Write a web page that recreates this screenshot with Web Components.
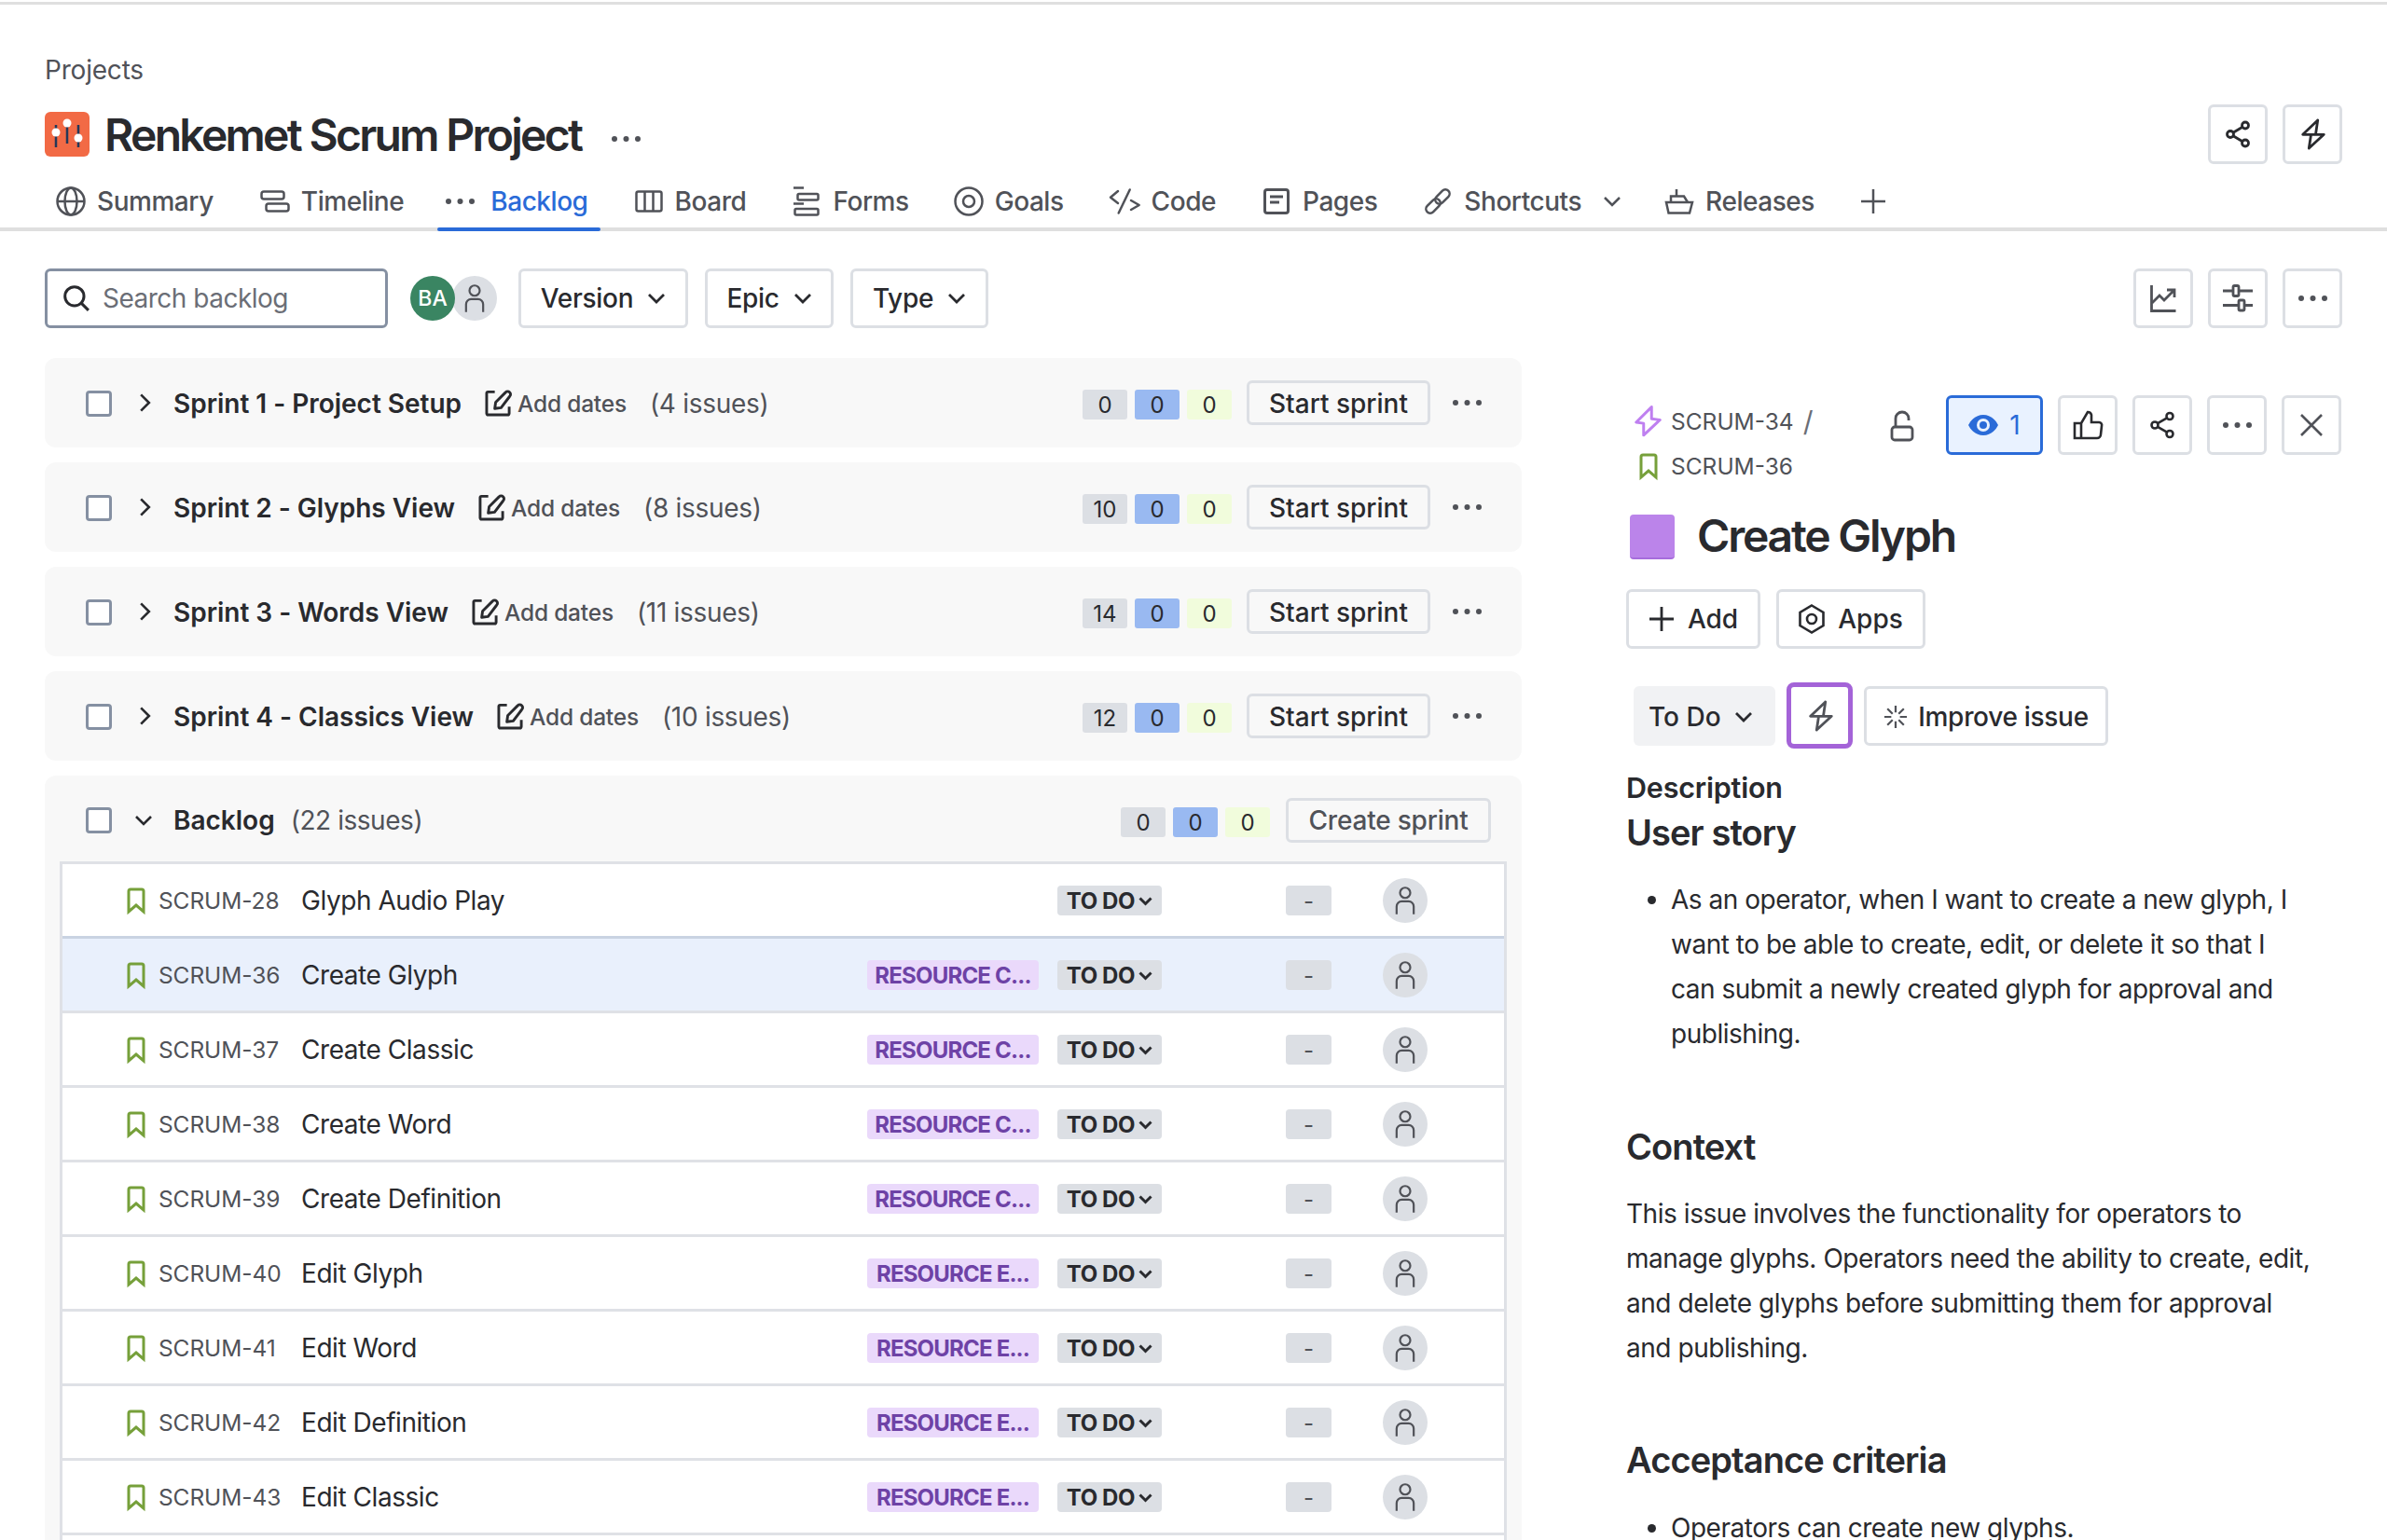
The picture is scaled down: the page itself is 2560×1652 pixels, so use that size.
<!DOCTYPE html>
<html lang="en">
<head>
<meta charset="utf-8">
<title>Backlog</title>
<style>
  html, body { margin: 0; background: #fff; }
  body {
    width: 2560px; height: 1652px; overflow: hidden;
    font-family: Inter, "Liberation Sans", sans-serif; font-size: 28px; color: #292a2e;
    display: flex; flex-direction: column;
  }
</style>
</head>
<body>
<jira-page>
  <project-header slot="header" name="Renkemet Scrum Project"></project-header>
  <tab-bar slot="tabs">
    <nav-tab icon="globe" w="32" h="32" label="Summary" m="50"></nav-tab>
    <nav-tab icon="timeline" w="32" h="24" label="Timeline" m="44"></nav-tab>
    <nav-tab icon="dots" w="33" h="8" label="Backlog" g="16" m="50" active></nav-tab>
    <nav-tab icon="board" w="30" h="24" label="Board" g="13" m="51"></nav-tab>
    <nav-tab icon="forms" w="28" h="32" label="Forms" g="14" m="48"></nav-tab>
    <nav-tab icon="goals" w="32" h="32" label="Goals" m="48"></nav-tab>
    <nav-tab icon="code" w="34" h="28" label="Code" m="51"></nav-tab>
    <nav-tab icon="pages" w="28" h="28" label="Pages" g="14" m="51"></nav-tab>
    <nav-tab icon="link" w="28" h="28" label="Shortcuts" g="14" m="46" caret></nav-tab>
    <nav-tab icon="ship" w="32" h="28" label="Releases" m="49"></nav-tab>
    <nav-tab icon="plus" w="28" h="28" label=""></nav-tab>
  </tab-bar>
  <backlog-toolbar slot="toolbar"></backlog-toolbar>
  <backlog-list slot="list">
    <sprint-row name="Sprint 1 - Project Setup" issues="4 issues" todo="0"></sprint-row>
    <sprint-row name="Sprint 2 - Glyphs View" issues="8 issues" todo="10"></sprint-row>
    <sprint-row name="Sprint 3 - Words View" issues="11 issues" todo="14"></sprint-row>
    <sprint-row name="Sprint 4 - Classics View" issues="10 issues" todo="12"></sprint-row>
    <backlog-section issues="22 issues">
      <issue-row key="SCRUM-28" summary="Glyph Audio Play"></issue-row>
      <issue-row key="SCRUM-36" summary="Create Glyph" label="RESOURCE C..." selected></issue-row>
      <issue-row key="SCRUM-37" summary="Create Classic" label="RESOURCE C..."></issue-row>
      <issue-row key="SCRUM-38" summary="Create Word" label="RESOURCE C..."></issue-row>
      <issue-row key="SCRUM-39" summary="Create Definition" label="RESOURCE C..."></issue-row>
      <issue-row key="SCRUM-40" summary="Edit Glyph" label="RESOURCE E..."></issue-row>
      <issue-row key="SCRUM-41" summary="Edit Word" label="RESOURCE E..."></issue-row>
      <issue-row key="SCRUM-42" summary="Edit Definition" label="RESOURCE E..."></issue-row>
      <issue-row key="SCRUM-43" summary="Edit Classic" label="RESOURCE E..."></issue-row>
    </backlog-section>
  </backlog-list>
  <issue-panel slot="panel"></issue-panel>
</jira-page>

<script>
(function () {
    'use strict';

    // 图标表：[viewBox, 内容]
    const ICONS = {
        globe: ['0 0 32 32', '<circle cx="16" cy="16" r="14.5"/><ellipse cx="16" cy="16" rx="6.5" ry="14.5"/><path d="M1.5 16h29"/>'],
        timeline: ['0 0 32 24', '<rect x="1.5" y="1.5" width="24" height="8" rx="2.5"/><rect x="6.5" y="14.5" width="24" height="8" rx="2.5"/>'],
        dots: ['0 0 33 8', '<g fill="currentColor" stroke="none"><circle cx="4" cy="4" r="3"/><circle cx="16.5" cy="4" r="3"/><circle cx="29" cy="4" r="3"/></g>'],
        board: ['0 0 30 24', '<rect x="1.5" y="1.5" width="27" height="21" rx="2"/><path d="M10.5 1.5v21M19.5 1.5v21"/>'],
        forms: ['0 0 28 32', '<path d="M0 1.5h11M0 18.5h11"/><rect x="4.5" y="8" width="22" height="6.5" rx="1.5"/><rect x="1.5" y="24" width="25" height="6.5" rx="1.5"/>'],
        goals: ['0 0 32 32', '<circle cx="16" cy="16" r="14.5"/><circle cx="16" cy="16" r="6"/>'],
        code: ['0 0 34 28', '<path stroke-linecap="round" stroke-linejoin="round" d="M10 3 2 9.700l8 6.300M22.700 1.500 10.700 26.500M24 13l8.700 5-8.700 5"/>'],
        pages: ['0 0 28 28', '<rect x="1.500" y="1.500" width="25" height="25" rx="2.500"/><path d="M7 9h14M7 15h10"/>'],
        link: ['0 0 28 28', '<g transform="rotate(-45 14 14)"><rect x="12" y="9.500" width="18" height="9" rx="4.500"/><rect x="-2" y="9.500" width="18" height="9" rx="4.500"/></g>'],
        ship: ['0 0 32 28', '<path d="M2 15h28l-3 11.500H4.500z"/><path d="M7 15V8.500h14L25 15M13 8V1"/>'],
        plus: ['0 0 28 28', '<path d="M14 1v26M1 14h26"/>'],
        chevron: ['0 0 20 12', '<path d="M2 2l8 8 8-8"/>'],
        right: ['0 0 12 20', '<path d="M2 2l8 8-8 8"/>'],
        search: ['0 0 28 28', '<circle cx="12" cy="12" r="9.500"/><path d="M19 19l7 7"/>'],
        person: ['0 0 24 34', '<circle cx="12" cy="8" r="6"/><path d="M2 33V24a6 6 0 0 1 6-6h8a6 6 0 0 1 6 6v9"/>'],
        share: ['0 0 28 30', '<circle cx="22" cy="5.500" r="3.500"/><circle cx="6" cy="15" r="3.500"/><circle cx="22" cy="24.500" r="3.500"/><path d="M9 13.200 19 7.300M9 16.800l10 5.900"/>'],
        bolt: ['0 0 26 34', '<path stroke-linejoin="round" stroke-linecap="round" d="M18.700 2 2.700 17.300H25.300L9.300 32M18.700 2 16.500 17M9.300 32 11.500 17.500"/>'],
        boltp: ['0 0 26 32', '<path stroke-linejoin="round" d="M17 1.500 1.500 17 9 18v12l16.500-15.500L17 13.500z"/>'],
        chart: ['0 0 28 30', '<path d="M1.500 1v27.500h26"/><path d="M2 20l8-8 5 5 10-10M18 6h8v8"/>'],
        sliders: ['0 0 32 30', '<rect x="11" y="1.500" width="6" height="11" rx="1.500"/><rect x="17" y="17" width="6" height="11" rx="1.500"/><path d="M0 7h11M17 7h15M0 22.500h17M23 22.500h9"/>'],
        lock: ['0 0 26 34', '<rect x="2" y="18" width="22" height="14" rx="3"/><path d="M6 18V9a7 7 0 0 1 14 0v2"/>'],
        eye: ['0 0 32 24', '<path d="M16 1C25 1 30 8 32 12 30 16 25 23 16 23S2 16 0 12C2 8 7 1 16 1z" fill="currentColor" stroke="none"/><circle cx="16" cy="12" r="7" fill="#e9f2ff" stroke="none"/><circle cx="16" cy="12" r="4" fill="currentColor" stroke="none"/>'],
        like: ['0 0 32 32', '<path d="M9 14h-7v16h24a4 4 0 0 0 4-4l1-9a3 3 0 0 0-3-4H20V5a4 4 0 0 0-4-3l-7 12v16"/>'],
        close: ['0 0 26 26', '<path d="M2 2l22 22M24 2 2 24"/>'],
        hex: ['0 0 28 32', '<path d="M14 1.500 26.500 9v14L14 30.500 1.500 23V9z"/><circle cx="14" cy="16" r="5"/>'],
        spark: ['0 0 28 28', '<path d="M14 1v8M14 19v8M1 14h8M19 14h8M4.500 4.500l6 6M17.500 17.500l6 6M23.500 4.500l-6 6M10.500 17.500l-6 6"/>'],
        edit: ['0 0 30 30', '<path stroke-linejoin="round" d="M11 2.500H3.500a1.500 1.500 0 0 0-1.500 1.500v22.500a1.500 1.500 0 0 0 1.500 1.500H25.500a1.500 1.500 0 0 0 1.500-1.500V19"/><path stroke-linejoin="round" d="M11 21l1-7L23 3a3 3 0 0 1 4.500 0 3 3 0 0 1 0 4.500L18 20z"/>'],
        bookmark: ['0 0 20 28', '<path d="M2 26V4a2 2 0 0 1 2-2h12a2 2 0 0 1 2 2v22l-8-7z"/>']
    };

    function el(name, css, render) {
        customElements.define(name, class extends HTMLElement {
            connectedCallback() {
                if (this.shadowRoot) return;
                const root = this.attachShadow({ mode: 'open' });
                const tpl = document.createElement('template');
                tpl.innerHTML = '<style>' + css + '</style>' + render(this);
                root.appendChild(tpl.content.cloneNode(true));
            }
        });
    }

    const icon = (n, w, h, sw, color) =>
        `<ui-icon name="${n}" w="${w}" h="${h}" sw="${sw || 2.5}"${color ? ` style="color:${color}"` : ''}></ui-icon>`;

    el('ui-icon', ':host{display:inline-flex;flex:none} svg{display:block;fill:none;stroke:currentColor;overflow:visible}', (h) => {
        const def = ICONS[h.getAttribute('name')];
        return `<svg viewBox="${def[0]}" width="${h.getAttribute('w')}" height="${h.getAttribute('h')}" stroke-width="${h.getAttribute('sw')}">${def[1]}</svg>`;
    });

    // 通用按钮
    el('ui-button', `
      :host{display:inline-flex;align-items:center;justify-content:center;box-sizing:border-box;height:64px;gap:var(--gap,12px);
        padding:var(--pad,0 20px);border:3px solid #dcdfe4;border-radius:6px;background:#fff;color:#292a2e;font-weight:500;flex:none}
      :host([icon-only]){width:64px;padding:0}
      :host([plain]){background:transparent}
    `, () => '<slot></slot>');

    el('jira-page', `
      :host{display:flex;flex-direction:column;flex:1;min-height:0}
      .line{height:3px;margin-top:2px;background:#dfdfdf}
      .main{display:grid;grid-template-columns:1584px 768px;column-gap:112px;padding-left:48px;flex:1;min-height:0;margin-top:32px}
    `, () => `
      <div class="line"></div>
      <slot name="header"></slot>
      <slot name="tabs"></slot>
      <slot name="toolbar"></slot>
      <div class="main"><slot name="list"></slot><slot name="panel"></slot></div>
    `);

    el('project-header', `
      :host{display:block;padding:52px 48px 0}
      .crumb{height:36px;line-height:36px;color:#505258;font-size:28px;margin-bottom:19px;letter-spacing:-.2px;padding-top:2px;margin-top:-2px}
      .row{display:flex;align-items:center;height:64px}
      .logo{width:48px;height:48px;border-radius:6px;background:#f26a45;flex:none;margin-right:16px}
      .logo svg{display:block}
      h1{margin:0;font-size:48px;font-weight:600;letter-spacing:-2.7px;white-space:nowrap}
      .more{margin-left:32px;color:#505258;margin-top:-2px}
      .end{margin-left:auto;display:flex;gap:16px}
    `, (h) => `
      <div class="crumb">Projects</div>
      <div class="row">
        <div class="logo"><svg viewBox="0 0 48 48" width="48" height="48">
          <g stroke="#253858" stroke-width="2.500"><path d="M12 14v24M24 8v26M36 14v24"/></g>
          <g fill="#fff"><circle cx="12" cy="22" r="4.500"/><circle cx="24" cy="12" r="4.500"/><circle cx="36" cy="28" r="4.500"/></g>
        </svg></div>
        <h1>${h.getAttribute('name')}</h1>
        <span class="more">${icon('dots', 33, 8)}</span>
        <div class="end">
          <ui-button icon-only>${icon('share', 28, 30, 2.8)}</ui-button>
          <ui-button icon-only>${icon('bolt', 26, 34, 2.8)}</ui-button>
        </div>
      </div>
    `);

    el('tab-bar', `
      :host{display:flex;height:72px;box-sizing:border-box;padding-left:60px;border-bottom:4px solid #dfdfdf;align-items:stretch}
    `, () => '<slot></slot>');

    el('nav-tab', `
      :host{display:flex;align-items:center;position:relative;color:#505258;font-weight:500;font-size:28px;padding-top:12px;white-space:nowrap;letter-spacing:-.45px}
      :host([active]){color:#2a6bd8}
      :host([active]) .i{color:#505258}
      :host([active])::after{content:"";position:absolute;left:-8px;right:-13px;bottom:-4px;height:4px;background:#2a6bd8;border-radius:2px}
      .i{display:flex;align-items:center}
      .c{margin-left:9px;color:#505258;display:flex}
    `, (h) => {
        h.style.gap = (h.getAttribute('g') || 12) + 'px';
        h.style.marginRight = (h.getAttribute('m') || 0) + 'px';
        return `
      <span class="i">${icon(h.getAttribute('icon'), h.getAttribute('w'), h.getAttribute('h'), h.getAttribute('icon') === 'pages' ? 3 : 2.5)}</span>
      ${h.getAttribute('label') ? `<span>${h.getAttribute('label')}</span>` : ''}
      ${h.hasAttribute('caret') ? `<span class="c">${icon('chevron', 20, 12)}</span>` : ''}
    `;
    });

    el('filter-button', ':host{display:inline-flex}ui-button{--pad:0;--gap:15px;font-weight:500;letter-spacing:-.3px}', (h) =>
        `<ui-button style="width:${h.getAttribute('w')}px">${h.getAttribute('label')}${icon('chevron', 20, 12, 2.8)}</ui-button>`);

    el('backlog-toolbar', `
      :host{display:flex;align-items:center;height:64px;margin-top:40px;padding:0 48px}
      .search{display:flex;align-items:center;gap:13px;box-sizing:border-box;width:368px;height:64px;padding-left:16px;
        border:3px solid #8590a2;border-radius:6px;color:#6b6e76;letter-spacing:-.5px}
      .search ui-icon{color:#292a2e}
      .avatars{display:flex;margin:0 24px 0 24px}
      .ba{width:48px;height:48px;border-radius:50%;background:#3a8562;color:#fff;font-size:23px;font-weight:500;display:flex;align-items:center;justify-content:center;position:relative;z-index:1}
      .un{width:48px;height:48px;border-radius:50%;background:#dcdfe4;margin-left:-3px;display:flex;align-items:center;justify-content:center;color:#505258}
      .f{display:flex;gap:18px;margin-left:-1px}
      .end{margin-left:auto;display:flex;gap:16px;color:#505258}
    `, () => `
      <div class="search">${icon('search', 30, 30, 2.8)}<span>Search backlog</span></div>
      <div class="avatars"><div class="ba">BA</div><div class="un">${icon('person', 22, 32, 2.4)}</div></div>
      <div class="f"><filter-button label="Version" w="182"></filter-button><filter-button label="Epic" w="138"></filter-button><filter-button label="Type" w="148"></filter-button></div>
      <div class="end">
        <ui-button icon-only>${icon('chart', 28, 30, 2.8, '#505258')}</ui-button>
        <ui-button icon-only>${icon('sliders', 32, 30, 2.8, '#505258')}</ui-button>
        <ui-button icon-only>${icon('dots', 33, 8, 2.5, '#505258')}</ui-button>
      </div>
    `);

    el('backlog-list', ':host{display:flex;flex-direction:column;gap:16px;min-height:0}', () => '<slot></slot>');

    el('count-badges', `
      :host{display:flex;gap:8px;font-size:24px;margin-top:4px}
      span{width:48px;height:32px;border-radius:3px;display:flex;align-items:center;justify-content:center;background:#dcdfe4}
      .b{background:#99b9f1}
      .g{background:#f1fcdc}
    `, (h) => `<span>${h.getAttribute('todo')}</span><span class="b">0</span><span class="g">0</span>`);

    const checkbox = '<span class="check"></span>';
    const checkCss = '.check{width:28px;height:28px;box-sizing:border-box;border:3px solid #8590a2;border-radius:4px;background:#fff;flex:none;margin-top:2px}';

    el('sprint-row', `
      :host{display:flex;align-items:center;height:96px;box-sizing:border-box;padding:0 38px 0 44px;background:#f8f8f8;border-radius:12px;white-space:nowrap}
      ${checkCss}
      .chev{margin:0 0 0 29px;width:37px;color:#292a2e;display:flex}
      b{font-weight:600;padding-top:2px;letter-spacing:-.02px}
      .edit{margin-left:25px;color:#292a2e;display:flex}
      .dates{font-size:24.500px;color:#505258;margin-left:6px;font-weight:500;letter-spacing:-.2px;padding-top:1px}
      .count{margin-left:25px;color:#505258;letter-spacing:-.3px;padding-top:2px}
      count-badges{margin-left:auto;margin-right:16px}
      ui-button{height:48px;--pad:2px 0 0;width:197px;font-weight:500}
      .more{width:37px;margin-left:23px;display:flex;color:#505258}
    `, (h) => `
      ${checkbox}
      <span class="chev">${icon('right', 13, 22, 2.4)}</span>
      <b>${h.getAttribute('name')}</b>
      <span class="edit">${icon('edit', 29, 29, 3)}</span>
      <span class="dates">Add dates</span>
      <span class="count">(${h.getAttribute('issues')})</span>
      <count-badges todo="${h.getAttribute('todo')}"></count-badges>
      <ui-button plain>Start sprint</ui-button>
      <span class="more">${icon('dots', 33, 8)}</span>
    `);

    el('backlog-section', `
      :host{display:flex;flex-direction:column;flex:1;min-height:0;background:#f8f8f8;border-radius:12px 12px 0 0;padding:0 16px 0 16px}
      .head{display:flex;align-items:center;height:92px;padding:4px 17px 0 28px;white-space:nowrap;box-sizing:border-box}
      ${checkCss}
      .check{margin-top:0}
      .chev{margin-left:24px;width:42px;display:flex}
      b{font-weight:600}
      .count{margin-left:17px;color:#505258;letter-spacing:-.45px}
      count-badges{margin-left:auto;margin-right:17px}
      ui-button{height:48px;--pad:0;width:220px;color:#505258;letter-spacing:-.2px}
      .table{flex:1;background:#fff;border:solid #dfe1e6;border-width:3px 3px 0;min-height:0;margin-top:0}
    `, (h) => `
      <div class="head">
        ${checkbox}
        <span class="chev">${icon('chevron', 20, 12, 2.6)}</span>
        <b>Backlog</b>
        <span class="count">(${h.getAttribute('issues')})</span>
        <count-badges todo="0"></count-badges>
        <ui-button plain>Create sprint</ui-button>
      </div>
      <div class="table"><slot></slot></div>
    `);

    el('issue-row', `
      :host{display:flex;align-items:center;height:80px;box-sizing:border-box;padding-left:69px;border-bottom:3px solid #dfe1e6;white-space:nowrap}
      :host([selected]){background:#e9f0fc;box-shadow:0 -3px 0 #c9d3e2}
      .bm{color:#76a03a;display:flex;margin-right:14px}
      .key{width:153px;font-size:24.500px;color:#505258;flex:none;padding-top:1px;letter-spacing:-.1px}
      .sum{flex:1;letter-spacing:-.45px}
      .label,.st,.dash{height:32px;border-radius:4px;font-size:24px;display:flex;align-items:center;justify-content:center;box-sizing:border-box;padding-top:2px}
      .label{width:184px;background:#ead9fb;color:#6e42a6;font-weight:700;letter-spacing:-.8px}
      .st{width:112px;margin-left:20px;background:#dcdfe4;font-weight:700;gap:4px;color:#292a2e;letter-spacing:-.4px}
      .dash{width:49px;margin-left:133px;background:#dcdfe4;color:#505258}
      .av{width:48px;height:48px;border-radius:50%;background:#dcdfe4;margin:0 82px 0 55px;display:flex;align-items:center;justify-content:center;color:#505258}
    `, (h) => `
      <span class="bm">${icon('bookmark', 20, 28, 3)}</span>
      <span class="key">${h.getAttribute('key')}</span>
      <span class="sum">${h.getAttribute('summary')}</span>
      ${h.hasAttribute('label') ? `<span class="label">${h.getAttribute('label')}</span>` : ''}
      <span class="st">TO DO${icon('chevron', 15, 9, 4)}</span>
      <span class="dash">-</span>
      <span class="av">${icon('person', 22, 32, 2.4)}</span>
    `);

    el('issue-panel', `
      :host{display:block;padding-top:40px;min-height:0;color:#292a2e}
      .top{display:flex;align-items:flex-start;height:100px}
      .crumbs{width:283px;font-size:24.500px;color:#505258;line-height:48px;padding-top:4px}
      .crumbs div{display:flex;align-items:center;height:48px}
      .crumbs .sl{margin-left:10px;font-size:30px;color:#6b6e76}
      .lock{width:60px;padding-top:16px;color:#505258}
      .acts{display:flex;gap:16px}
      .watch{--pad:0;width:104px;background:#e9f2ff;border-color:#2a6bd8;color:#2a6bd8;font-weight:400;--gap:12px}
      .title{display:flex;align-items:center;height:48px;margin-top:28px;margin-left:4px}
      .sw{width:48px;height:48px;border-radius:4px;background:#bb84ea;border-bottom:2px solid #a66cdc;box-sizing:border-box;margin-right:24px}
      h1{margin:-3px 0 0;font-size:48px;font-weight:600;letter-spacing:-2.2px}
      .btns{display:flex;gap:17px;margin-top:32px}
      .status{display:flex;align-items:center;gap:12px;margin:36px 0 0 8px;height:71px}
      .todo{display:flex;align-items:center;gap:14px;width:152px;height:64px;box-sizing:border-box;padding:2px 0 0 16px;background:#f1f2f4;border-radius:6px;font-weight:500;color:#292a2e}
      .boltb{width:71px;height:71px;box-sizing:border-box;border:5px solid #a463d8;border-radius:8px;display:flex;align-items:center;justify-content:center;color:#505258}
      .imp{--pad:2px 0 0;width:262px;--gap:11px;letter-spacing:-.3px}
      .imp ui-icon{color:#505258}
      h2{margin:0;font-weight:600}
      .d{font-size:30.500px;line-height:40px;margin-top:22px;letter-spacing:-.2px}
      .u{font-size:38px;line-height:48px;margin-top:4px;letter-spacing:-.9px}
      .c{font-size:38px;line-height:48px;letter-spacing:-.9px}
      ul{margin:0;padding:0 32px 0 48px;line-height:48px;font-size:28px;letter-spacing:-.48px}
      p{margin:0;padding-right:27px;line-height:48px;font-size:28px;letter-spacing:-.45px}
    `, () => `
      <div class="top">
        <div class="crumbs">
          <div><span style="margin:0 11px 0 9px;display:flex">${icon('boltp', 28, 34, 2.8, '#bf80f0')}</span><span>SCRUM-34</span><span class="sl">/</span></div>
          <div><span style="margin:0 14px;display:flex">${icon('bookmark', 20, 28, 3, '#76a03a')}</span><span>SCRUM-36</span></div>
        </div>
        <div class="lock">${icon('lock', 26, 34, 2.8)}</div>
        <div class="acts">
          <ui-button class="watch">${icon('eye', 32, 24, 2)}<span>1</span></ui-button>
          <ui-button icon-only>${icon('like', 32, 32, 2.6)}</ui-button>
          <ui-button icon-only>${icon('share', 28, 30, 2.6)}</ui-button>
          <ui-button icon-only>${icon('dots', 33, 8, 2.5, '#505258')}</ui-button>
          <ui-button icon-only>${icon('close', 26, 26, 2.6, '#505258')}</ui-button>
        </div>
      </div>
      <div class="title"><span class="sw"></span><h1>Create Glyph</h1></div>
      <div class="btns">
        <ui-button style="--pad:0;width:144px;--gap:14px">${icon('plus', 28, 28, 2.8)}Add</ui-button>
        <ui-button style="--pad:0;width:160px;--gap:14px">${icon('hex', 28, 32, 2.6)}Apps</ui-button>
      </div>
      <div class="status">
        <div class="todo">To Do${icon('chevron', 20, 12, 2.8)}</div>
        <div class="boltb">${icon('bolt', 26, 34, 2.8)}</div>
        <ui-button class="imp">${icon('spark', 26, 26, 2.4)}Improve issue</ui-button>
      </div>
      <h2 class="d">Description</h2>
      <h2 class="u">User story</h2>
      <ul style="margin-top:24px"><li>As an operator, when I want to create a new glyph, I want to be able to create, edit, or delete it so that I can submit a newly created glyph for approval and publishing.</li></ul>
      <h2 class="c" style="margin-top:73px">Context</h2>
      <p style="margin-top:24px">This issue involves the functionality for operators to manage glyphs. Operators need the ability to create, edit, and delete glyphs before submitting them for approval and publishing.</p>
      <h2 class="c" style="margin-top:72px">Acceptance criteria</h2>
      <ul style="margin-top:25px"><li>Operators can create new glyphs.</li></ul>
    `);
})();
</script>
</body>
</html>
